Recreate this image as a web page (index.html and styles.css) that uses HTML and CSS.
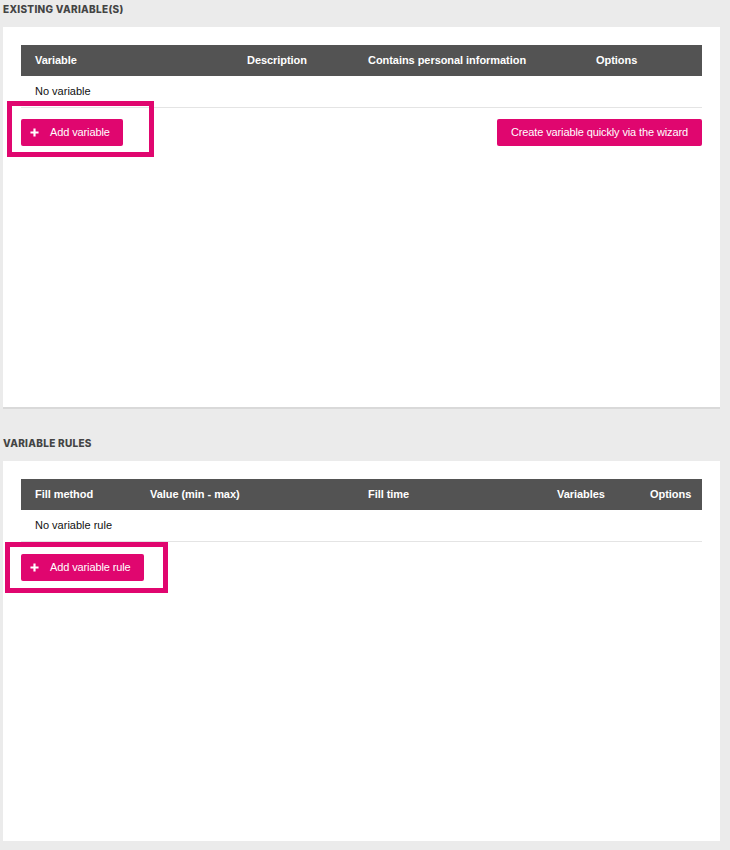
FILE: index.html
```html
<!DOCTYPE html>
<html lang="en">
<head>
  <meta charset="UTF-8" />
  <title>Variables</title>
  <link rel="stylesheet" href="styles.css">
</head>
<body>
  <section class="section">
    <h2 class="section-title">Existing variable(s)</h2>
    <div class="card">
      <table class="data-table cols-variables">
        <thead>
          <tr>
            <th>Variable</th>
            <th>Description</th>
            <th>Contains personal information</th>
            <th>Options</th>
          </tr>
        </thead>
        <tbody>
          <tr><td colspan="4">No variable</td></tr>
        </tbody>
      </table>
      <div class="actions">
        <button class="btn">
          <svg class="icon" viewBox="0 0 10 10"><path d="M5 0.5v9M0.5 5h9"/></svg>
          Add variable
        </button>
        <button class="btn btn-plain">Create variable quickly via the wizard</button>
      </div>
      <div class="highlight highlight-variable"></div>
    </div>
  </section>

  <section class="section">
    <h2 class="section-title">Variable rules</h2>
    <div class="card">
      <table class="data-table cols-rules">
        <thead>
          <tr>
            <th>Fill method</th>
            <th>Value (min - max)</th>
            <th>Fill time</th>
            <th>Variables</th>
            <th>Options</th>
          </tr>
        </thead>
        <tbody>
          <tr><td colspan="5">No variable rule</td></tr>
        </tbody>
      </table>
      <div class="actions actions-rules">
        <button class="btn">
          <svg class="icon" viewBox="0 0 10 10"><path d="M5 0.5v9M0.5 5h9"/></svg>
          Add variable rule
        </button>
      </div>
      <div class="highlight highlight-rule"></div>
    </div>
  </section>
</body>
</html>
```

FILE: styles.css
```css
:root {
  --accent: #e0066f;
  --page: #ebebeb;
  --head: #535353;
  --text: #111111;
  --title: #444444;
  --line: #e4e4e4;
}

* {
  margin: 0;
  padding: 0;
  box-sizing: border-box;
}

body {
  background: var(--page);
  font-family: 'Liberation Sans', Arial, sans-serif;
  color: var(--text);
  padding: 0 10px 0 3px;
}

.section + .section {
  margin-top: 27px;
}

.section-title {
  font-family: 'Inter', sans-serif;
  font-size: 10px;
  font-weight: 800;
  text-transform: uppercase;
  letter-spacing: 0.3px;
  color: var(--title);
  line-height: 18px;
  margin-bottom: 9px;
}

.card {
  position: relative;
  background: #ffffff;
  min-height: 380px;
  padding: 18px;
  box-shadow: 0 2px 0 #d9d9d9;
}

.data-table {
  width: 100%;
  border-collapse: collapse;
  table-layout: fixed;
  font-size: 11px;
}

.data-table th {
  background: var(--head);
  color: #ffffff;
  font-weight: 700;
  text-align: left;
  height: 31px;
  padding: 0 14px 1px;
  letter-spacing: -0.05px;
}

.data-table td {
  height: 31px;
  padding: 0 14px 1px;
  border-bottom: 1px solid var(--line);
}

.cols-variables th:nth-child(1) { width: 212px; }
.cols-variables th:nth-child(2) { width: 121px; }
.cols-variables th:nth-child(3) { width: 228px; }

.cols-rules th:nth-child(1) { width: 115px; }
.cols-rules th:nth-child(2) { width: 218px; }
.cols-rules th:nth-child(3) { width: 189px; }
.cols-rules th:nth-child(4) { width: 93px; }

.actions {
  display: flex;
  justify-content: space-between;
  margin-top: 11px;
}

.actions-rules {
  margin-top: 12px;
}

.btn {
  display: flex;
  align-items: center;
  gap: 11px;
  height: 27px;
  padding: 0 13px 0 9px;
  border: none;
  border-radius: 2px;
  background: var(--accent);
  color: #ffffff;
  font-family: 'Liberation Sans', Arial, sans-serif;
  font-size: 11px;
  letter-spacing: -0.12px;
}

.btn-plain {
  padding: 0 14px;
}

.icon {
  width: 9px;
  height: 9px;
  stroke: #ffffff;
  stroke-width: 2.4;
  fill: none;
}

/* annotation frames drawn over the add buttons */
.highlight {
  position: absolute;
  border: 5px solid var(--accent);
  pointer-events: none;
}

.highlight-variable {
  left: 4px;
  top: 74px;
  width: 147px;
  height: 56px;
}

.highlight-rule {
  left: 2px;
  top: 81px;
  width: 163px;
  height: 51px;
}
```
